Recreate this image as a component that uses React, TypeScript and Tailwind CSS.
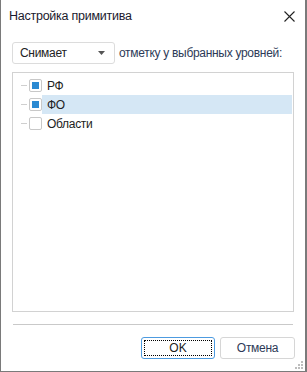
import React from "react";

const font = { fontFamily: '"Liberation Sans", "Noto Sans", sans-serif' };

function Check({ checked }: { checked: boolean }) {
  return (
    <div className="w-[13px] h-[13px] rounded-[2px] border border-[#c8c8c8] bg-white flex items-center justify-center">
      {checked && <div className="w-[7px] h-[7px] bg-[#2b8ad2]" />}
    </div>
  );
}

function Row({ label, checked, selected }: { label: string; checked: boolean; selected?: boolean }) {
  return (
    <div className="flex items-center h-[19px]">
      <div className="w-[6px] h-px bg-[#cfcfcf] ml-[8px] mr-[2px]" />
      <Check checked={checked} />
      <div className={`flex-1 h-full flex items-center pl-[5px] ${selected ? "bg-[#d5e7f5]" : ""}`}>
        <span className="text-[12px] tracking-[-0.3px] text-[#222]">{label}</span>
      </div>
    </div>
  );
}

export default function App() {
  return (
    <div className="w-[307px] h-[372px] bg-white border-l border-r-2 border-b border-[#7a7a7a] flex flex-col relative" style={font}>
      <div className="flex items-center justify-between h-[34px] pl-[8px] pr-[10px]">
        <span className="text-[12.5px] tracking-[-0.25px] text-[#1a1a2e] mt-[-2px]">Настройка примитива</span>
        <svg width="11" height="11" viewBox="0 0 11 11" className="mt-[-1px]">
          <path d="M0.5 0.5 L10.5 10.5 M10.5 0.5 L0.5 10.5" stroke="#222" strokeWidth="1.1" />
        </svg>
      </div>
      <div className="flex items-center mt-[8px] ml-[11px]">
        <div className="w-[103px] h-[22px] border border-[#dcdcdc] rounded-[3px] flex items-center justify-between pl-[7px] pr-[9px]">
          <span className="text-[12px] tracking-[-0.3px] text-[#222]">Снимает</span>
          <svg width="7" height="4" viewBox="0 0 7 4"><path d="M0 0 H7 L3.5 4 Z" fill="#555" /></svg>
        </div>
        <span className="text-[12px] tracking-[-0.3px] text-[#2d3a57] ml-[4px]">отметку у выбранных уровней:</span>
      </div>
      <div className="mx-[11px] mt-[8px] h-[240px] border border-[#d2d2d2] pt-[3px] pr-[1px]">
        <Row label="РФ" checked />
        <Row label="ФО" checked selected />
        <Row label="Области" checked={false} />
      </div>
      <div className="mx-[12px] mt-[12px] h-px bg-[#c9c9c9]" />
      <div className="flex justify-end gap-[5px] mt-[12px] mr-[10px]">
        <button className="w-[74px] h-[22px] border border-[#4d9be0] rounded-[3px] bg-white p-[2px]">
          <div className="w-full h-full border border-dotted border-black flex items-center justify-center text-[12px] text-[#222]">OK</div>
        </button>
        <button className="w-[75px] h-[22px] border border-[#d6d6d6] rounded-[3px] bg-white flex items-center justify-center text-[12px] tracking-[-0.3px] text-[#2d3a57]">Отмена</button>
      </div>
      <svg className="absolute right-[1px] bottom-[1px]" width="10" height="10" viewBox="0 0 10 10">
        <rect x="7" y="1" width="2" height="2" fill="#bdbdbd" />
        <rect x="4" y="4" width="2" height="2" fill="#bdbdbd" />
        <rect x="7" y="4" width="2" height="2" fill="#bdbdbd" />
        <rect x="1" y="7" width="2" height="2" fill="#bdbdbd" />
        <rect x="4" y="7" width="2" height="2" fill="#bdbdbd" />
        <rect x="7" y="7" width="2" height="2" fill="#bdbdbd" />
      </svg>
    </div>
  );
}
